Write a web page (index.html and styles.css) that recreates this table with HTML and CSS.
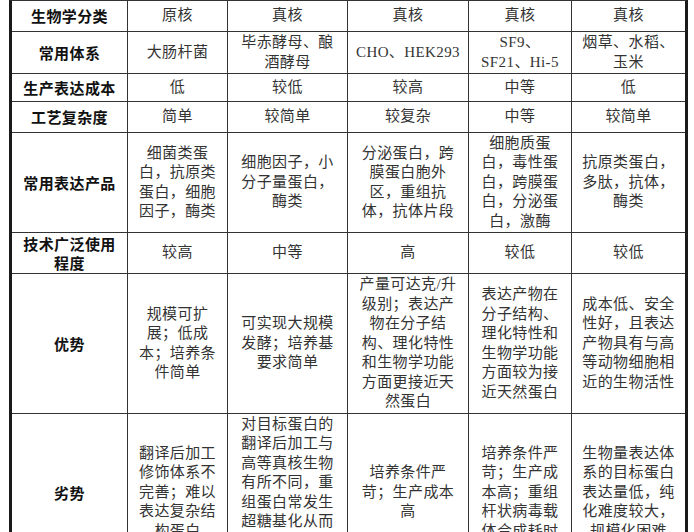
FILE: index.html
```html
<!DOCTYPE html>
<html lang="zh-CN">
<head>
<meta charset="utf-8">
<title>表达系统比较</title>
<link rel="stylesheet" href="styles.css">
</head>
<body>
<table class="cmp">
  <colgroup>
    <col class="c0"><col class="c1"><col class="c2"><col class="c3"><col class="c4"><col class="c5">
  </colgroup>
  <tbody>
    <tr class="r1">
      <th>生物学分类</th><td>原核</td><td>真核</td><td>真核</td><td>真核</td><td>真核</td>
    </tr>
    <tr class="r2">
      <th>常用体系</th><td>大肠杆菌</td><td>毕赤酵母、酿<br>酒酵母</td><td>CHO、HEK293</td><td>SF9、<br>SF21、Hi-5</td><td>烟草、水稻、<br>玉米</td>
    </tr>
    <tr class="r3">
      <th>生产表达成本</th><td>低</td><td>较低</td><td>较高</td><td>中等</td><td>低</td>
    </tr>
    <tr class="r4">
      <th>工艺复杂度</th><td>简单</td><td>较简单</td><td>较复杂</td><td>中等</td><td>较简单</td>
    </tr>
    <tr class="r5">
      <th>常用表达产品</th>
      <td>细菌类蛋<br>白，抗原类<br>蛋白，细胞<br>因子，酶类</td>
      <td>细胞因子，小<br>分子量蛋白，<br>酶类</td>
      <td>分泌蛋白，跨<br>膜蛋白胞外<br>区，重组抗<br>体，抗体片段</td>
      <td>细胞质蛋<br>白，毒性蛋<br>白，跨膜蛋<br>白，分泌蛋<br>白，激酶</td>
      <td>抗原类蛋白，<br>多肽，抗体，<br>酶类</td>
    </tr>
    <tr class="r6">
      <th>技术广泛使用<br>程度</th><td>较高</td><td>中等</td><td>高</td><td>较低</td><td>较低</td>
    </tr>
    <tr class="r7">
      <th>优势</th>
      <td>规模可扩<br>展；低成<br>本；培养条<br>件简单</td>
      <td>可实现大规模<br>发酵；培养基<br>要求简单</td>
      <td>产量可达克/升<br>级别；表达产<br>物在分子结<br>构、理化特性<br>和生物学功能<br>方面更接近天<br>然蛋白</td>
      <td>表达产物在<br>分子结构、<br>理化特性和<br>生物学功能<br>方面较为接<br>近天然蛋白</td>
      <td>成本低、安全<br>性好，且表达<br>产物具有与高<br>等动物细胞相<br>近的生物活性</td>
    </tr>
    <tr class="r8">
      <th>劣势</th>
      <td>翻译后加工<br>修饰体系不<br>完善；难以<br>表达复杂结<br>构蛋白</td>
      <td>对目标蛋白的<br>翻译后加工与<br>高等真核生物<br>有所不同，重<br>组蛋白常发生<br>超糖基化从而<br>影响蛋白的生<br>物活性</td>
      <td>培养条件严<br>苛；生产成本<br>高</td>
      <td>培养条件严<br>苛；生产成<br>本高；重组<br>杆状病毒载<br>体合成耗时</td>
      <td>生物量表达体<br>系的目标蛋白<br>表达量低，纯<br>化难度较大，<br>规模化困难</td>
    </tr>
  </tbody>
</table>
</body>
</html>
```

FILE: styles.css
```css
html, body {
  margin: 0;
  padding: 0;
  background: #ffffff;
}

.cmp {
  margin-left: 9px;
  border-collapse: separate;
  border-spacing: 0;
  table-layout: fixed;
  width: 679px;
  border-top: 1px solid #333333;
  border-left: 3px solid #1a1a1a;
  border-right: 3px solid #1a1a1a;
  font-family: "Liberation Serif", "Noto Sans CJK SC", serif;
  font-size: 15px;
  line-height: 19.5px;
  color: #333333;
}

.c0 { width: 116px; }
.c1 { width: 100px; }
.c2 { width: 120px; }
.c3 { width: 121px; }
.c4 { width: 103px; }
.c5 { width: 113px; }

.cmp th,
.cmp td {
  padding: 0 2px;
  text-align: center;
  vertical-align: middle;
  white-space: nowrap;
  letter-spacing: 0.4px;
  border-right: 1px solid #333333;
  border-bottom: 1px solid #333333;
}

.cmp th:last-child,
.cmp td:last-child {
  border-right: none;
}

.cmp th {
  font-family: "Noto Sans CJK SC", sans-serif;
  font-weight: 700;
  color: #111111;
}

.r1 { height: 31px; }
.r2 { height: 42px; }
.r3 { height: 28px; }
.r4 { height: 31px; }
.r5 { height: 100px; }
.r6 { height: 41px; }
.r7 { height: 140px; }
.r8 { height: 158px; }
```
